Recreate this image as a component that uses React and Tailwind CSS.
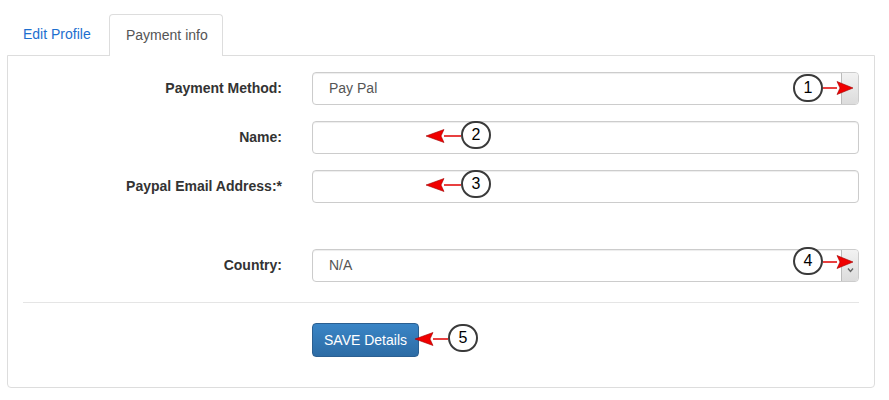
export default function App() {
  const rows = [
    { label: "Payment Method:", value: "Pay Pal", select: true },
    { label: "Name:", value: "" },
    { label: "Paypal Email Address:*", value: "" },
  ];

  return (
    <div className="relative w-[889px] h-[400px] bg-white pt-[14px] pl-[7px] font-['Liberation_Sans',Arial,sans-serif] text-[14px] text-[#333]">
      {/* Tabs */}
      <div className="flex items-end h-[41px]">
        <div className="w-[100px] ml-px mr-px h-[41px] pl-[15px] flex items-center text-[#1d6fcf]">
          Edit Profile
        </div>
        <div className="relative z-10 w-[114px] h-[42px] -mb-px pl-[16px] flex items-center bg-white border border-b-0 border-[#ddd] rounded-t-[4px] text-[#555]">
          Payment info
        </div>
      </div>

      {/* Panel */}
      <div className="w-[868px] h-[333px] border border-[#ddd] rounded-b-[4px] px-[15px] pt-[16px]">
        <div className="flex flex-col gap-[16px]">
          {rows.map((r) => (
            <FormRow key={r.label} label={r.label} value={r.value} select={r.select} />
          ))}
        </div>
        <div className="mt-[46px]">
          <FormRow label="Country:" value="N/A" select check />
        </div>
        <div className="mt-[20px] border-t border-[#e5e5e5]" />
        <div className="mt-[20px] pl-[289px]">
          <button className="w-[107px] h-[34px] rounded-[4px] border border-[#2b5f91] bg-gradient-to-b from-[#3a85c6] to-[#2d6ca5] text-white text-[14px]">
            SAVE Details
          </button>
        </div>
      </div>

      {/* Callouts */}
      <svg className="absolute left-0 top-0 pointer-events-none" width="889" height="400">
        <Arrow x1={823} y={88} dir="right" tip={853} />
        <Arrow x1={461} y={136} dir="left" tip={426} />
        <Arrow x1={461} y={185} dir="left" tip={426} />
        <Arrow x1={823} y={262} dir="right" tip={853} />
        <Arrow x1={448} y={339} dir="left" tip={415} />
      </svg>
      <Bubble n="1" className="left-[793px] top-[74px]" />
      <Bubble n="2" className="left-[461px] top-[121px]" />
      <Bubble n="3" className="left-[461px] top-[170px]" />
      <Bubble n="4" className="left-[793px] top-[247px]" />
      <Bubble n="5" className="left-[448px] top-[324px]" />
    </div>
  );
}

function FormRow({ label, value, select, check }) {
  return (
    <div className="flex items-center h-[33px]">
      <div className="w-[289px] pr-[30px] text-right font-bold text-[#333]">{label}</div>
      <div className="flex-1 h-[33px] flex items-stretch border border-[#ccc] rounded-[4px] shadow-[inset_0_1px_1px_rgba(0,0,0,0.075)] overflow-hidden">
        <div className="flex-1 flex items-center pl-[16px] text-[#555]">{value}</div>
        {select && (
          <div className="w-[17px] border-l border-[#bbb] bg-gradient-to-b from-[#f2f2f2] to-[#dcdcdc] flex items-end justify-center pb-[8px]">
            {check && (
              <svg width="7" height="6" viewBox="0 0 7 6">
                <path d="M1 1.5 L3.5 4.5 L6 1.5" fill="none" stroke="#666" strokeWidth="1.4" />
              </svg>
            )}
          </div>
        )}
      </div>
    </div>
  );
}

function Arrow({ x1, y, dir, tip }) {
  const base = dir === "right" ? tip - 16 : tip + 18;
  const notch = dir === "right" ? base + 3 : base - 3;
  return (
    <g>
      <line x1={x1} y1={y} x2={base} y2={y} stroke="#e00000" strokeWidth="1.5" />
      <polygon
        points={`${tip},${y} ${base},${y - 6.5} ${notch},${y} ${base},${y + 6.5}`}
        fill="#f00000"
        stroke="#a00000"
        strokeWidth="0.6"
      />
    </g>
  );
}

function Bubble({ n, className }) {
  return (
    <div
      className={`absolute w-[30px] h-[28px] rounded-full border-2 border-[#3a3a3a] bg-white flex items-center justify-center text-[16px] font-medium text-black ${className}`}
    >
      {n}
    </div>
  );
}
